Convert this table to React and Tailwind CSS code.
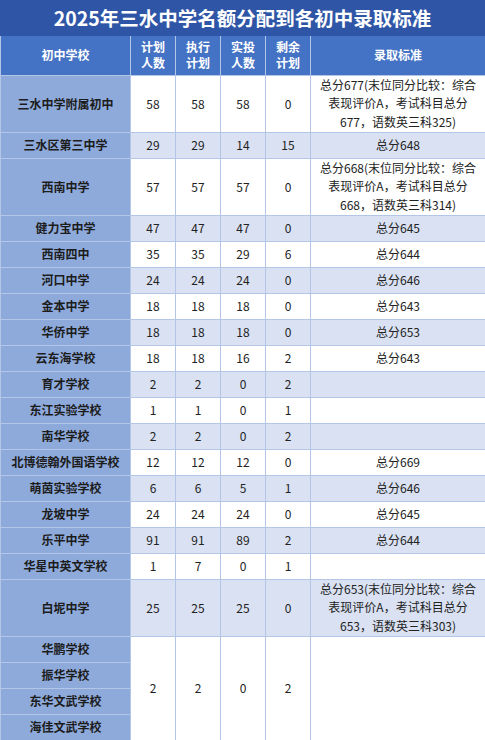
import React from "react";

const rows = [
  { name: "三水中学附属初中", plan: 58, exec: 58, actual: 58, left: 0, rule: "总分677(末位同分比较：综合表现评价A，考试科目总分677，语数英三科325)", tall: true },
  { name: "三水区第三中学", plan: 29, exec: 29, actual: 14, left: 15, rule: "总分648" },
  { name: "西南中学", plan: 57, exec: 57, actual: 57, left: 0, rule: "总分668(末位同分比较：综合表现评价A，考试科目总分668，语数英三科314)", tall: true },
  { name: "健力宝中学", plan: 47, exec: 47, actual: 47, left: 0, rule: "总分645" },
  { name: "西南四中", plan: 35, exec: 35, actual: 29, left: 6, rule: "总分644" },
  { name: "河口中学", plan: 24, exec: 24, actual: 24, left: 0, rule: "总分646" },
  { name: "金本中学", plan: 18, exec: 18, actual: 18, left: 0, rule: "总分643" },
  { name: "华侨中学", plan: 18, exec: 18, actual: 18, left: 0, rule: "总分653" },
  { name: "云东海学校", plan: 18, exec: 18, actual: 16, left: 2, rule: "总分643" },
  { name: "育才学校", plan: 2, exec: 2, actual: 0, left: 2, rule: "" },
  { name: "东江实验学校", plan: 1, exec: 1, actual: 0, left: 1, rule: "" },
  { name: "南华学校", plan: 2, exec: 2, actual: 0, left: 2, rule: "" },
  { name: "北博德翰外国语学校", plan: 12, exec: 12, actual: 12, left: 0, rule: "总分669" },
  { name: "萌茵实验学校", plan: 6, exec: 6, actual: 5, left: 1, rule: "总分646" },
  { name: "龙坡中学", plan: 24, exec: 24, actual: 24, left: 0, rule: "总分645" },
  { name: "乐平中学", plan: 91, exec: 91, actual: 89, left: 2, rule: "总分644" },
  { name: "华星中英文学校", plan: 1, exec: 7, actual: 0, left: 1, rule: "" },
  { name: "白坭中学", plan: 25, exec: 25, actual: 25, left: 0, rule: "总分653(末位同分比较：综合表现评价A，考试科目总分653，语数英三科303)", tall: true },
];

const grouped = ["华鹏学校", "振华学校", "东华文武学校", "海佳文武学校"];

const cell = "border border-[#b4c6e7] text-center align-middle p-0 leading-[16px]";
const nameCell = "border border-[#b4c6e7] bg-[#8eaadb] text-center align-middle font-bold text-[#1c1c1c] p-0 leading-[16px]";

export default function App() {
  return (
    <div
      className="w-[485px] h-[740px] overflow-hidden bg-white text-[12px] text-[#222]"
      style={{ fontFamily: '"Noto Sans CJK SC", "Noto Sans", sans-serif' }}
    >
      <div className="h-[36px] bg-[#2f56a6] flex items-center justify-center text-white font-bold text-[19.5px] leading-none">
        2025年三水中学名额分配到各初中录取标准
      </div>
      <table className="w-[485px] table-fixed border-collapse">
        <colgroup>
          <col className="w-[130px]" />
          <col className="w-[45px]" />
          <col className="w-[45px]" />
          <col className="w-[45px]" />
          <col className="w-[45px]" />
          <col className="w-[175px]" />
        </colgroup>
        <thead>
          <tr className="h-[39px] bg-[#4472c4] text-white font-bold leading-[16.5px]">
            <th className="border border-[#b4c6e7] border-t-0 p-0">初中学校</th>
            <th className="border border-[#b4c6e7] border-t-0 p-0">计划<br />人数</th>
            <th className="border border-[#b4c6e7] border-t-0 p-0">执行<br />计划</th>
            <th className="border border-[#b4c6e7] border-t-0 p-0">实投<br />人数</th>
            <th className="border border-[#b4c6e7] border-t-0 p-0">剩余<br />计划</th>
            <th className="border border-[#b4c6e7] border-t-0 p-0">录取标准</th>
          </tr>
        </thead>
        <tbody>
          {rows.map((r, i) => (
            <tr
              key={r.name}
              className={`${r.tall ? "h-[57px]" : "h-[26px]"} ${i % 2 === 1 ? "bg-[#d9e1f2]" : "bg-white"}`}
            >
              <td className={nameCell}>{r.name}</td>
              <td className={cell}>{r.plan}</td>
              <td className={cell}>{r.exec}</td>
              <td className={cell}>{r.actual}</td>
              <td className={cell}>{r.left}</td>
              <td className={`${cell} px-[6px] !leading-[18.5px]`}>{r.rule}</td>
            </tr>
          ))}
          {grouped.map((n, i) => (
            <tr key={n} className="h-[26px] bg-white">
              <td className={nameCell}>{n}</td>
              {i === 0 && (
                <>
                  <td rowSpan={4} className={cell}>2</td>
                  <td rowSpan={4} className={cell}>2</td>
                  <td rowSpan={4} className={cell}>0</td>
                  <td rowSpan={4} className={cell}>2</td>
                  <td rowSpan={4} className={cell}></td>
                </>
              )}
            </tr>
          ))}
        </tbody>
      </table>
    </div>
  );
}
